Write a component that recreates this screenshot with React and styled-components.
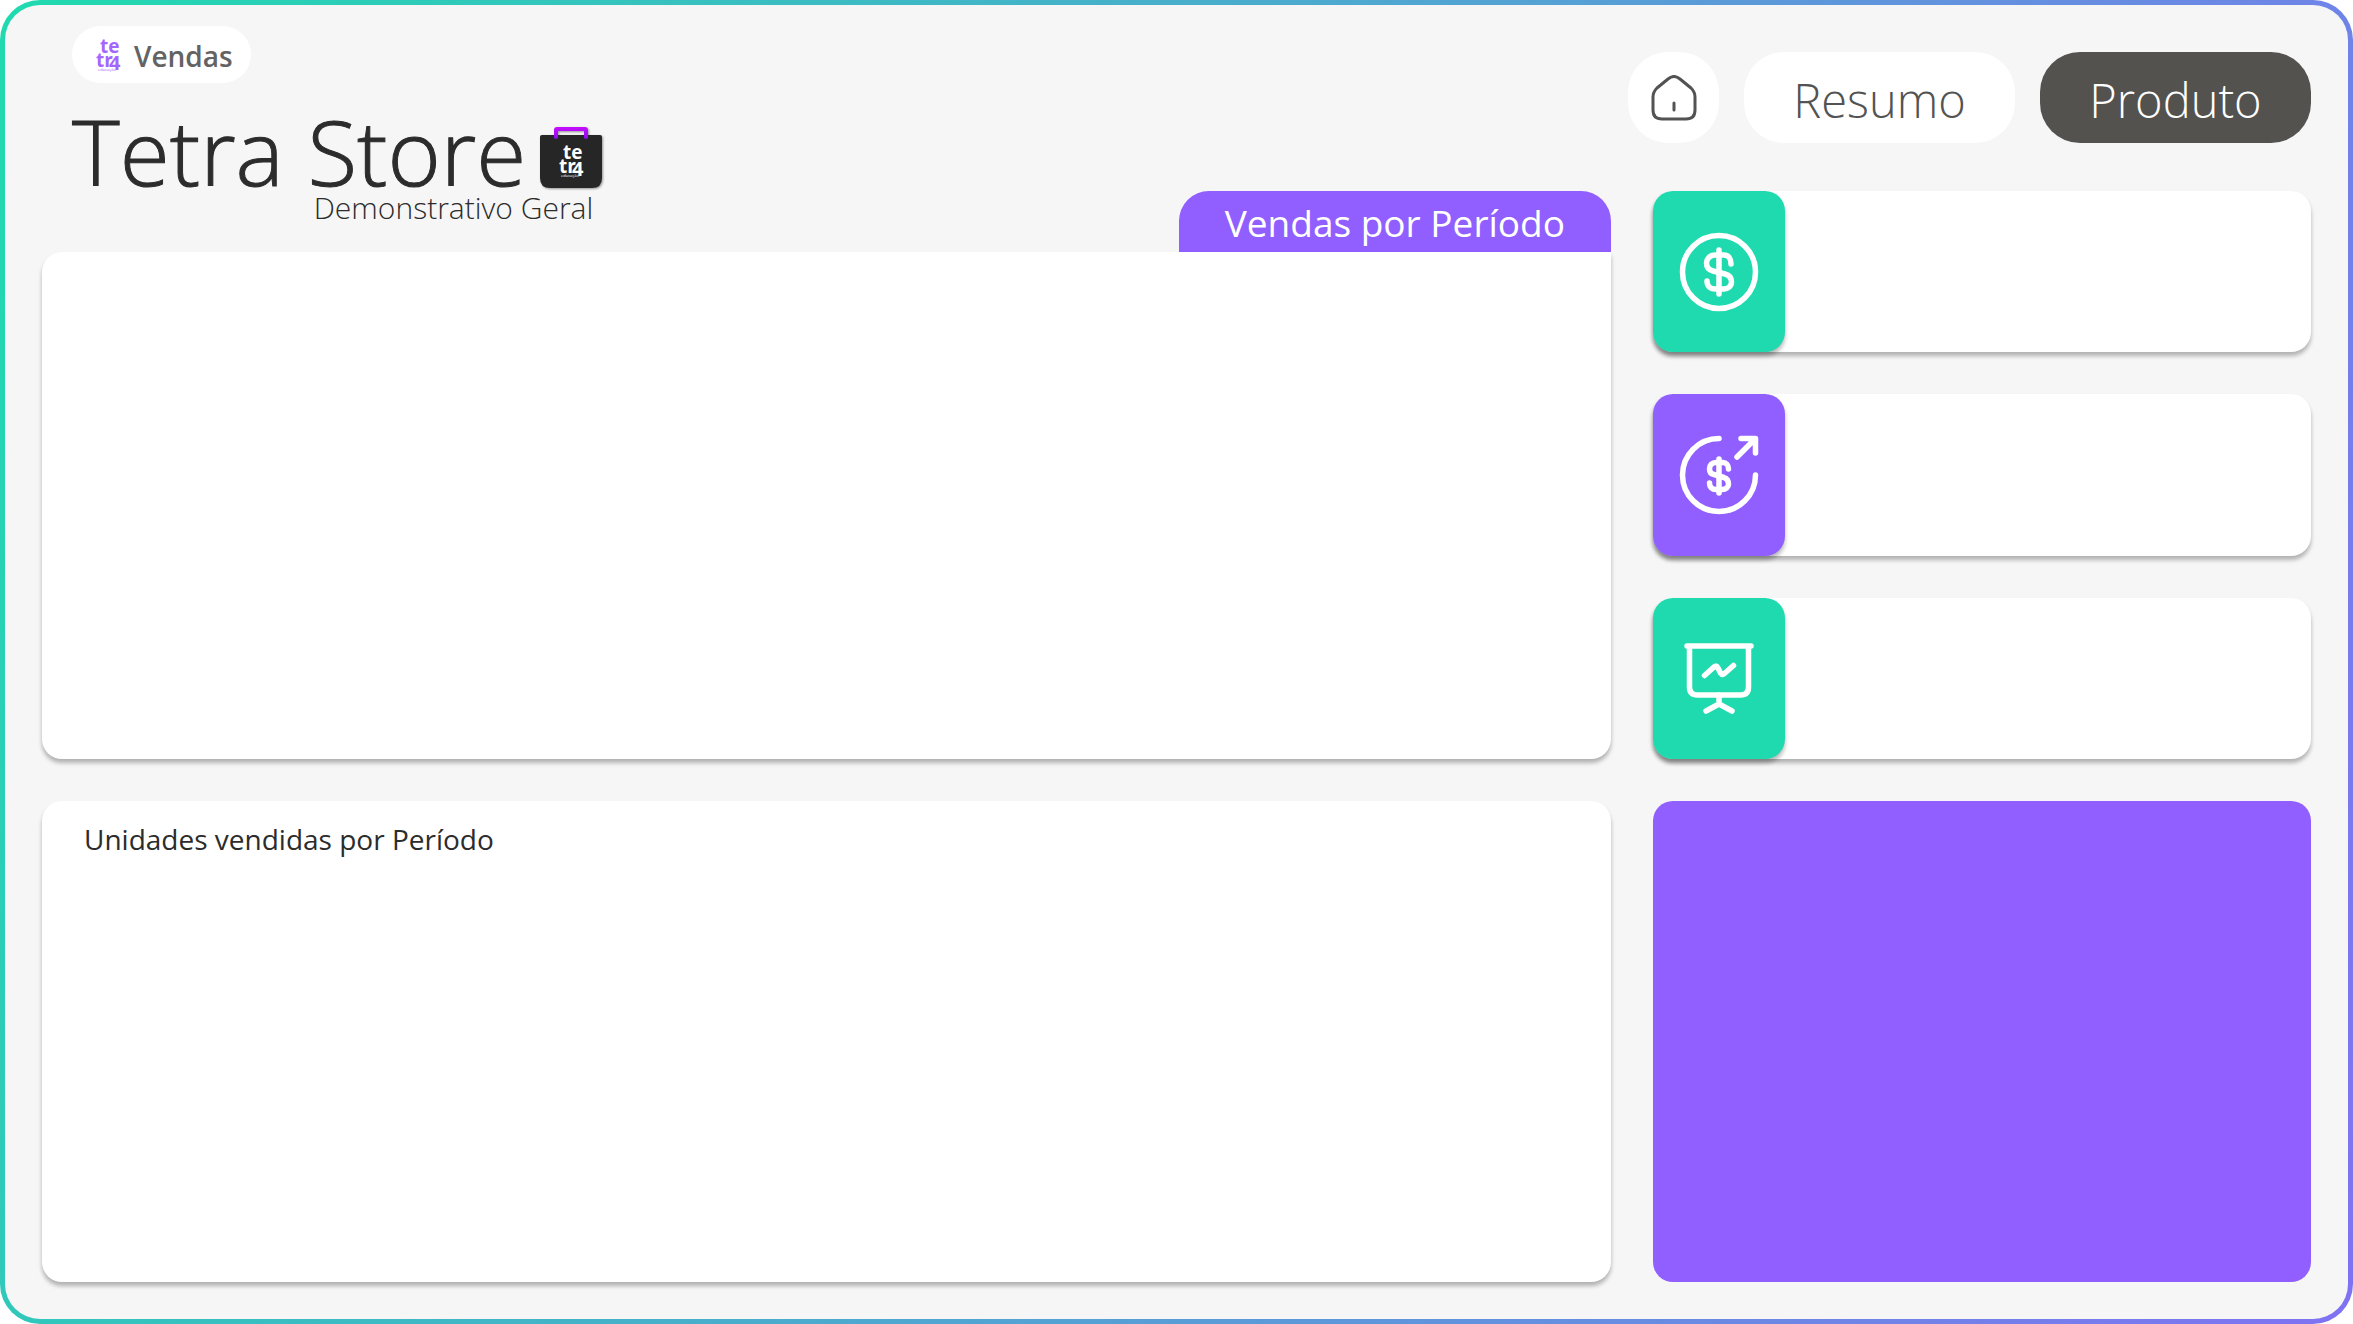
import React from "react";
import styled, { createGlobalStyle } from "styled-components";

const GlobalStyle = createGlobalStyle`
  * { box-sizing: border-box; }
  body { margin: 0; background: #fff; font-family: "Open Sans", "Noto Sans", sans-serif; color: #2c2c2c; }
  h1, h2, p { margin: 0; font-weight: 400; }
`;

const Frame = styled.div`
  display: flex;
  min-height: 100vh;
  padding: 5px;
  border-radius: 40px;
  background: linear-gradient(110deg, #20daaf 0%, #915fff 118%);
`;

const Page = styled.main`
  flex: 1;
  display: grid;
  grid-template-columns: minmax(0, 1569fr) minmax(0, 658fr);
  grid-template-rows: auto 1fr;
  gap: 42px;
  padding: 21px 37px 37px;
  border-radius: 35px;
  background: #f6f6f6;
`;

const Column = styled.section`
  display: flex;
  flex-direction: column;
`;

const Header = styled.header`
  display: flex;
  justify-content: space-between;
  align-items: flex-end;
  height: 226px;
  padding-left: 30px;
`;

const Brand = styled.div`
  align-self: flex-start;
  display: flex;
  flex-direction: column;
  align-items: flex-start;
`;

const Badge = styled.div`
  display: flex;
  align-items: center;
  gap: 14px;
  height: 57px;
  margin-bottom: 30px;
  padding: 2px 18px 0 24px;
  border-radius: 30px;
  background: #fff;
  color: #636363;
  font-size: 28px;
  font-weight: 600;
`;

const TitleRow = styled.div`
  display: flex;
  align-items: flex-end;
  gap: 14px;
`;

const Title = styled.h1`
  && { font-weight: 300; }
  font-size: 91px;
  line-height: 76px;
  white-space: nowrap;
  -webkit-text-stroke: 1px currentColor;
`;

const Subtitle = styled.p`
  && { font-weight: 300; }
  align-self: flex-end;
  padding-right: 10px;
  font-size: 30px;
  line-height: 38px;
`;

const Tab = styled.h2`
  padding: 2px 46px 0;
  border-radius: 30px 30px 0 0;
  background: #915fff;
  color: #fff;
  font-size: 37px;
  line-height: 59px;
  white-space: nowrap;
`;

const Panel = styled.section`
  flex: 1;
  min-height: ${(p) => (p.$tabbed ? "507px" : "0")};
  padding: 20px 42px;
  border-radius: ${(p) => (p.$tabbed ? "20px 0 20px 20px" : "20px")};
  background: ${(p) => (p.$accent ? "#915fff" : "#fff")};
  box-shadow: ${(p) => (p.$accent ? "none" : "0 4px 4px rgba(0, 0, 0, 0.28)")};
`;

const PanelTitle = styled.h2`
  font-size: 28px;
  line-height: 36px;
`;

const Nav = styled.nav`
  display: flex;
  justify-content: flex-end;
  gap: 25px;
  margin: 26px 0 48px;
`;

const NavButton = styled.button`
  flex-shrink: 0;
  display: flex;
  align-items: center;
  justify-content: center;
  width: ${(p) => (p.$square ? "91px" : "271px")};
  height: 91px;
  padding: ${(p) => (p.$square ? "0" : "4px 0 0")};
  border: 0;
  border-radius: 40px;
  background: ${(p) => (p.$active ? "#53524f" : "#fff")};
  color: ${(p) => (p.$active ? "#fff" : "#535353")};
  font-family: inherit;
  font-size: 47px;
  font-weight: 300;
  cursor: pointer;
`;

const Cards = styled.div`
  flex: 1;
  display: flex;
  flex-direction: column;
  gap: 42px;
`;

const Card = styled.article`
  flex: 1;
  display: flex;
  border-radius: 20px;
  background: #fff;
  box-shadow: 0 4px 4px rgba(0, 0, 0, 0.28);
`;

const Tile = styled.div`
  display: flex;
  align-items: center;
  justify-content: center;
  width: 132px;
  border-radius: 20px;
  background: ${(p) => p.$color};
  box-shadow: 0 4px 4px rgba(0, 0, 0, 0.28);
`;

const Icon = styled.svg`
  display: block;
  fill: none;
  stroke: ${(p) => p.$stroke || "#fff"};
  stroke-width: ${(p) => p.$weight || 5.5};
  stroke-linecap: round;
  stroke-linejoin: round;
`;

function TetraMark({ x = 0, y = 0 }) {
  return (
    <g
      transform={`translate(${x} ${y})`}
      fill="currentColor"
      fontFamily="Open Sans, sans-serif"
      fontWeight="700"
    >
      <text x="4" y="14" fontSize="19">te</text>
      <text x="0" y="28" fontSize="19">tr</text>
      <text x="13" y="31" fontSize="20">4</text>
      <text x="2" y="32" fontSize="4" fontWeight="400">educação</text>
    </g>
  );
}

function Logo() {
  return (
    <svg width="24" height="34" viewBox="0 0 24 34" color="#a366ff" overflow="visible" aria-hidden="true">
      <TetraMark />
    </svg>
  );
}

function Bag() {
  return (
    <svg width="63" height="62" viewBox="0 0 63 62" color="#fff" overflow="visible" aria-hidden="true">
      <defs>
        <linearGradient id="handle" x1="0" y1="0" x2="0" y2="1">
          <stop offset="0" stopColor="#c80dff" />
          <stop offset="1" stopColor="#8a0cf0" />
        </linearGradient>
        <filter id="bagShadow" x="-20%" y="-20%" width="140%" height="140%">
          <feDropShadow dx="1" dy="1" stdDeviation="1" floodOpacity="0.4" />
        </filter>
      </defs>
      <g filter="url(#bagShadow)">
        <path d="M2 8H60Q62 8 62 10V51Q62 61 52 61H10Q0 61 0 51V10Q0 8 2 8Z" fill="#272727" />
        <path d="M14 11V3Q14 0 17 0H45Q48 0 48 3V11Q46 13 44 11V4H18V11Q16 13 14 11Z" fill="url(#handle)" />
      </g>
      <TetraMark x={19} y={18} />
    </svg>
  );
}

function HomeIcon() {
  return (
    <Icon width="46" height="46" viewBox="0 0 46 46" $stroke="#535353" $weight={3} aria-hidden="true">
      <path d="M2 22Q2 17 6 13L17 4Q23 -1 29 4L40 13Q44 17 44 22V35Q44 44 35 44H11Q2 44 2 35Z" />
      <path d="M23 28V35" />
    </Icon>
  );
}

function DollarIcon() {
  return (
    <Icon width="80" height="80" viewBox="0 0 80 80" aria-hidden="true">
      <circle cx="40" cy="40" r="36.5" />
      <path d="M40 18V62" />
      <path d="M52 32C52 26 49 23 45 23H36C31 23 27.500 27 27.500 31C27.500 36 30 38 34 39L46 42C50 43 52.500 45 52.500 50C52.500 54 49 57 45 57H36C31 57 28 54 28 49" />
    </Icon>
  );
}

function DollarUpIcon() {
  return (
    <Icon width="80" height="80" viewBox="0 0 80 80" aria-hidden="true">
      <path d="M40 3.500A36.500 36.500 0 1 0 76.500 40" />
      <path d="M58 22L76 4M62 3.500H76.500V18" />
      <path d="M40 24V58" />
      <path d="M49.500 34C49.500 30 47 27.500 44 27.500H37C33 27.500 30.500 30 30.500 34C30.500 37 32 39 35 39.500L45 42.500C48 43.500 49.500 45 49.500 49C49.500 52 47 54.500 43 54.500H37C33 54.500 30.500 52 30.500 48" />
    </Icon>
  );
}

function BoardIcon() {
  return (
    <Icon width="72" height="72" viewBox="0 0 72 72" aria-hidden="true">
      <path d="M4 4H68M6.500 4V45Q6.500 53 14.500 53H57.500Q65.500 53 65.500 45V4" />
      <path d="M36 53V62M23 69L36 62L49 69" />
      <path d="M21.500 33.500L31 25Q33.500 23 35 26L37.500 31Q39.500 34 42 31L50.500 23.500" />
    </Icon>
  );
}

const kpis = [
  { name: "faturamento", color: "#20daaf", Glyph: DollarIcon },
  { name: "crescimento", color: "#915fff", Glyph: DollarUpIcon },
  { name: "desempenho", color: "#20daaf", Glyph: BoardIcon },
];

export default function App() {
  return (
    <>
      <GlobalStyle />
      <Frame>
        <Page>
          <Column>
            <Header>
              <Brand>
                <Badge>
                  <Logo />
                  Vendas
                </Badge>
                <TitleRow>
                  <Title>Tetra Store</Title>
                  <Bag />
                </TitleRow>
                <Subtitle>Demonstrativo Geral</Subtitle>
              </Brand>
              <Tab>Vendas por Período</Tab>
            </Header>
            <Panel $tabbed />
          </Column>
          <Column>
            <Nav>
              <NavButton type="button" $square aria-label="Início">
                <HomeIcon />
              </NavButton>
              <NavButton type="button">Resumo</NavButton>
              <NavButton type="button" $active aria-current="page">
                Produto
              </NavButton>
            </Nav>
            <Cards>
              {kpis.map(({ name, color, Glyph }) => (
                <Card key={name}>
                  <Tile $color={color}>
                    <Glyph />
                  </Tile>
                </Card>
              ))}
            </Cards>
          </Column>
          <Panel>
            <PanelTitle>Unidades vendidas por Período</PanelTitle>
          </Panel>
          <Panel $accent />
        </Page>
      </Frame>
    </>
  );
}
